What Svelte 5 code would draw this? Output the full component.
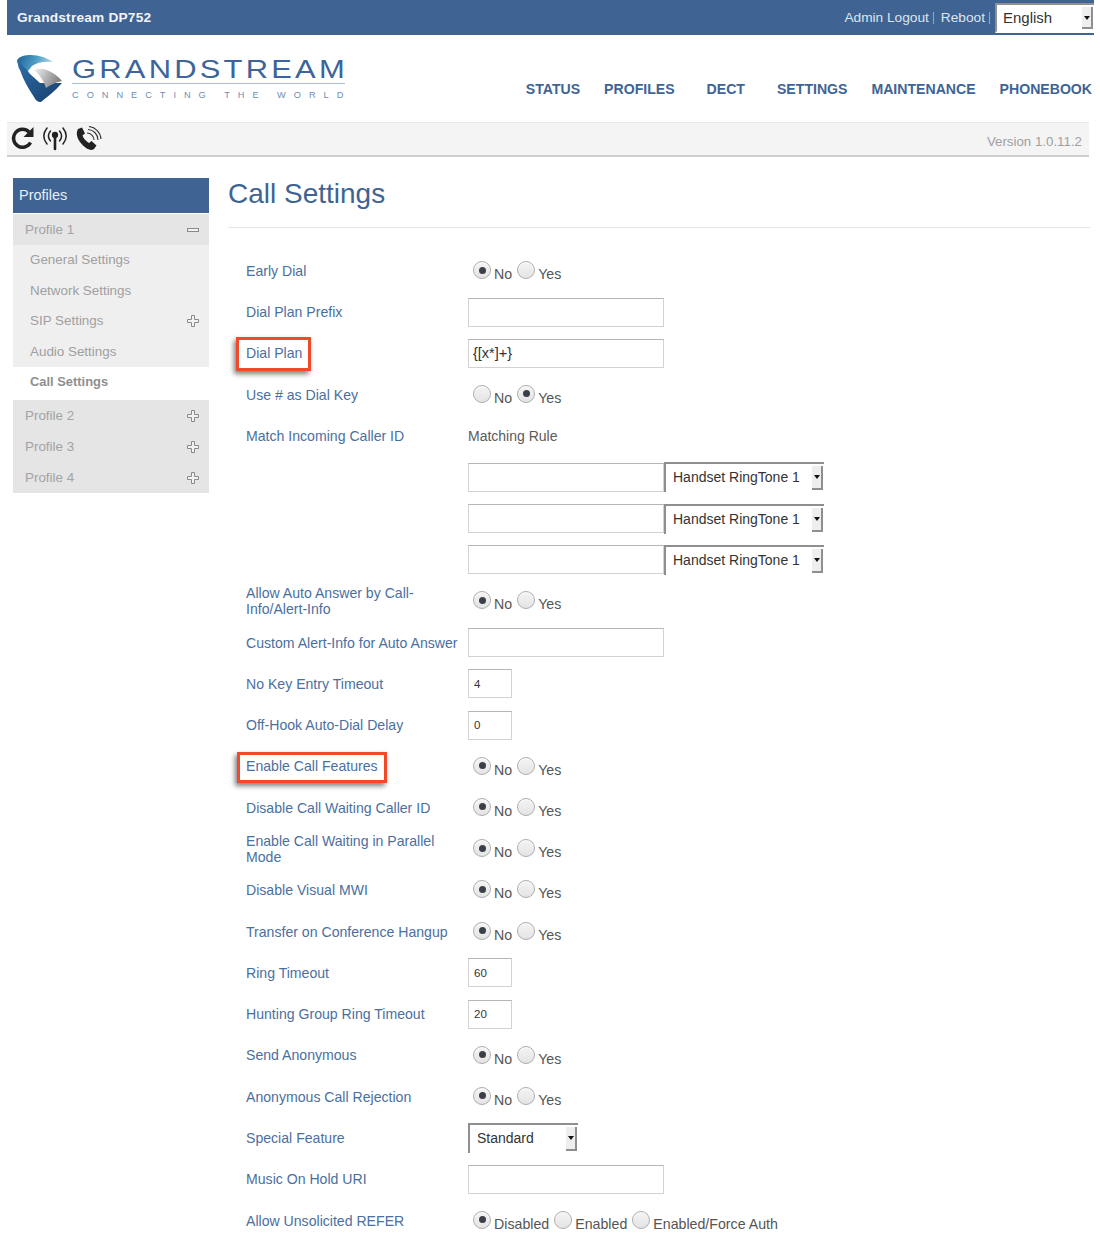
<script>
  const nav = [
    { t: 'STATUS', c: '' }, { t: 'PROFILES', c: 'wide' }, { t: 'DECT', c: 'wide' },
    { t: 'SETTINGS', c: '' }, { t: 'MAINTENANCE', c: '' }, { t: 'PHONEBOOK', c: '' }
  ];
  const rt = 'Handset RingTone 1';
  const rows = [
    { l: 'Early Dial', k: 'radio', on: 0 },
    { l: 'Dial Plan Prefix', k: 'text' },
    { l: 'Dial Plan', k: 'text', v: '{[x*]+}', box: 'b1' },
    { l: 'Use # as Dial Key', k: 'radio', on: 1 },
    { l: 'Match Incoming Caller ID', k: 'plain', v: 'Matching Rule' },
    { l: '', k: 'match' }, { l: '', k: 'match' }, { l: '', k: 'match' },
    { l: 'Allow Auto Answer by Call-Info/Alert-Info', k: 'radio', on: 0 },
    { l: 'Custom Alert-Info for Auto Answer', k: 'text' },
    { l: 'No Key Entry Timeout', k: 'small', v: '4' },
    { l: 'Off-Hook Auto-Dial Delay', k: 'small', v: '0' },
    { l: 'Enable Call Features', k: 'radio', on: 0, box: 'b2' },
    { l: 'Disable Call Waiting Caller ID', k: 'radio', on: 0 },
    { l: 'Enable Call Waiting in Parallel Mode', k: 'radio', on: 0 },
    { l: 'Disable Visual MWI', k: 'radio', on: 0 },
    { l: 'Transfer on Conference Hangup', k: 'radio', on: 0 },
    { l: 'Ring Timeout', k: 'small', v: '60' },
    { l: 'Hunting Group Ring Timeout', k: 'small', v: '20' },
    { l: 'Send Anonymous', k: 'radio', on: 0 },
    { l: 'Anonymous Call Rejection', k: 'radio', on: 0 },
    { l: 'Special Feature', k: 'special' },
    { l: 'Music On Hold URI', k: 'text' },
    { l: 'Allow Unsolicited REFER', k: 'radio', on: 0, opts: ['Disabled', 'Enabled', 'Enabled/Force Auth'] }
  ];
</script>

{#snippet plus()}
  <svg class="pm" width="12" height="12" viewBox="0 0 12 12"><path d="M4.5 .5h3v4h4v3h-4v4h-3v-4h-4v-3h4z" fill="#f2f2f2" stroke="#8a8a8a"/></svg>
{/snippet}

{#snippet selectBox(text, cls)}
  <div class="sel {cls}">
    <span>{text}</span>
    <i class="arrow"></i>
  </div>
{/snippet}

<div class="page">
  <header class="top">
    <strong>Grandstream DP752</strong>
    <div class="top-r">
      <a href="#a">Admin Logout</a><b></b><a href="#a">Reboot</a><b></b>
      <div class="lang"><span>English</span><i class="arrow"></i></div>
    </div>
  </header>

  <div class="brand">
    <div class="logo">
      <svg width="46" height="48" viewBox="0 0 46 48">
        <defs>
          <linearGradient id="lg1" x1="0" y1="0" x2="1" y2="0.2"><stop offset="0" stop-color="#1d5f96"/><stop offset=".55" stop-color="#4b9cc4"/><stop offset="1" stop-color="#a9d3e2"/></linearGradient>
          <linearGradient id="lg2" x1="0" y1="0" x2="1" y2="1"><stop offset="0" stop-color="#2f6ea6"/><stop offset="1" stop-color="#173f6e"/></linearGradient>
          <linearGradient id="lg3" x1="0" y1="0" x2="1" y2="0.4"><stop offset="0" stop-color="#f2f2f2"/><stop offset="1" stop-color="#7f7f7f"/></linearGradient>
        </defs>
        <path d="M0 5C3 1 8 0 14 0C22 0 30 3 36 7C28 6 20 7 15 11L11 16L2 14Z" fill="url(#lg1)"/>
        <path d="M0 5L11 16C12 19 18 23 23 28L45 28C38 36 30 42 24 47C21 47 19 46 17 42C9 30 3 18 0 5Z" fill="url(#lg2)"/>
        <path d="M17 15C27 11 38 18 45 26C40 27 33 30 29 33C27 26 22 19 17 15Z" fill="url(#lg3)"/>
      </svg>
      <div class="wordmark">
        <div class="w1"><span>GRANDSTREAM</span></div>
        <div class="w2"><span>CONNECTING THE WORLD</span></div>
      </div>
    </div>
    <nav>
      {#each nav as n}<a href="#n" class={n.c}>{n.t}</a>{/each}
    </nav>
  </div>

  <div class="tools">
    <div class="icons">
      <svg width="26" height="26" viewBox="0 0 26 26"><path d="M20.5 17.5A9 9 0 1 1 19 7" fill="none" stroke="#222" stroke-width="3.4"/><path d="M23.5 2v10h-10z" fill="#222"/></svg>
      <svg width="28" height="26" viewBox="0 0 28 26" fill="none" stroke="#222" stroke-width="1.5" stroke-linecap="round"><path d="M6 3C2 8 2 14 6 19"/><path d="M9.500 6C7 9 7 13 9.500 16"/><path d="M22 3C26 8 26 14 22 19"/><path d="M18.500 6C21 9 21 13 18.500 16"/><circle cx="14" cy="10" r="2.400" fill="#222"/><path d="M14 11V24" stroke-width="2.600"/></svg>
      <svg class="phone" width="28" height="26" viewBox="0 0 28 26"><path d="M4 3L8 1.500L11 7.500L8.500 9.500C9.500 12.500 12 15.500 15 17L17.500 15L22.500 19.500L20 23C17 25 13 23.500 9 19.500C4 14.500 1 8 4 3Z" fill="#222"/><path d="M13 6A7 7 0 0 1 20 13M14 2.500A10.500 10.500 0 0 1 24 13M15 -.5A13.500 13.500 0 0 1 27 12" transform="translate(0 1)" fill="none" stroke="#333" stroke-width="1.100"/></svg>
    </div>
    <span class="ver">Version 1.0.11.2</span>
  </div>

  <div class="main">
    <aside>
      <div class="side-h">Profiles</div>
      <div class="prof">Profile 1<svg class="pm" width="12" height="12" viewBox="0 0 12 12"><rect x=".5" y="4.500" width="11" height="3" fill="#f2f2f2" stroke="#8a8a8a"/></svg></div>
      <ul>
        <li>General Settings</li>
        <li>Network Settings</li>
        <li>SIP Settings{@render plus()}</li>
        <li>Audio Settings</li>
      </ul>
      <div class="cur">Call Settings</div>
      <div class="prof">Profile 2{@render plus()}</div>
      <div class="prof">Profile 3{@render plus()}</div>
      <div class="prof">Profile 4{@render plus()}</div>
    </aside>

    <section>
      <h1>Call Settings</h1>
      <div class="rows">
        {#each rows as r, i}
          <div class="row">
            <div class="lab">
              <span>{r.l}</span>
              {#if r.box}<i class="mark {r.box}"></i>{/if}
            </div>
            <div class="ctl">
              {#if r.k === 'radio'}
                <div class="radios">
                  {#each r.opts ?? ['No', 'Yes'] as o, j}
                    <label><input type="radio" name={'r' + i} checked={j === r.on} /><span>{o}</span></label>
                  {/each}
                </div>
              {:else if r.k === 'text'}
                <input class="tx" type="text" value={r.v ?? ''} />
              {:else if r.k === 'small'}
                <input class="tx sm" type="text" value={r.v} />
              {:else if r.k === 'plain'}
                <span class="plain">{r.v}</span>
              {:else if r.k === 'match'}
                <div class="pair"><input class="tx" type="text" />{@render selectBox(rt, 'ring')}</div>
              {:else if r.k === 'special'}
                {@render selectBox('Standard', 'std')}
              {/if}
            </div>
          </div>
        {/each}
      </div>
    </section>
  </div>
</div>

<style>
  :global(body) { margin: 0; background: #fff; font-family: "Liberation Sans", Arial, sans-serif; }
  .page { width: 1100px; height: 1242px; overflow: hidden; font-size: 14px; }
  a { color: inherit; text-decoration: none; }

  .top { margin-left: 7px; width: 1087px; height: 35px; box-sizing: border-box; background: #3f6494; color: #f1f4f8; display: flex; align-items: center; justify-content: space-between; padding-left: 10px; }
  .top strong { font-size: 13.7px; letter-spacing: .2px; }
  .top-r { display: flex; align-items: center; color: #dde4ee; font-size: 13.7px; }
  .top-r b { width: 1px; height: 12px; background: #8fa6c4; margin: 0 5px 0 4px; }
  .top-r a:nth-of-type(2) { margin-left: 2px; }
  .lang { position: relative; width: 99px; height: 30px; box-sizing: border-box; background: #fff; color: #333; border: 2px solid #8f8f8f; border-right: 0; border-bottom-color: #fff; padding: 4px 6px; font-size: 15px; line-height: 18px; }

  .arrow { position: absolute; right: 1px; top: 2px; bottom: 2px; width: 11px; background: #eeeeee; border-right: 2px solid #8f8f8f; border-bottom: 2px solid #8f8f8f; box-sizing: border-box; }
  .arrow::after { content: ""; position: absolute; left: 2px; top: 9px; border: 3.5px solid transparent; border-top: 4px solid #111; border-bottom: 0; }

  .brand { margin-left: 7px; width: 1087px; height: 87px; position: relative; display: flex; justify-content: space-between; }
  .logo { display: flex; margin: 20px 0 0 10px; gap: 9px; align-items: flex-start; height: 48px; }
  .wordmark { color: #3c659b; width: 273px; }
  .w1 { height: 29px; box-sizing: border-box; border-bottom: 1px solid #a9bfda; line-height: 28px; font-size: 25px; white-space: nowrap; }
  .w1 span { display: inline-block; transform: scaleX(1.237); transform-origin: left; letter-spacing: 2.6px; }
  .w2 { font-size: 9.2px; letter-spacing: 8px; line-height: 12px; margin-top: 5px; color: #6e8cb3; white-space: nowrap; }
  nav { display: flex; gap: 24px; margin-top: 46px; color: #3f6494; font-weight: bold; font-size: 14.1px; height: 17px; line-height: 17px; position: absolute; right: 2px; }
  nav a.wide { margin-right: 8px; }

  .tools { margin-left: 7px; width: 1082px; height: 35px; box-sizing: border-box; background: #f4f4f4; border-top: 1px solid #e8e8e8; border-bottom: 2px solid #cfcfcf; display: flex; justify-content: space-between; align-items: center; padding: 0 7px 0 3px; }
  .icons { display: flex; gap: 5px; align-items: center; height: 26px; margin-top: -2px; }
  .phone { margin-top: 2px; }
  .ver { color: #a0a0a0; font-size: 13.3px; margin-top: 4px; }

  .main { display: flex; margin: 21px 0 0 13px; }
  aside { width: 196px; color: #9f9f9f; flex: none; font-size: 13.4px; }
  .side-h { height: 35px; background: #3f6494; color: #e9eef5; line-height: 35px; padding-left: 6px; font-size: 14.5px; margin-bottom: 1px; }
  .prof { height: 31px; background: #e5e5e5; display: flex; align-items: center; justify-content: space-between; padding: 0 10px 0 12px; color: #a3a3a3; }
  ul { list-style: none; margin: 0; padding: 0; background: #efefef; }
  li { height: 30.5px; box-sizing: border-box; display: flex; align-items: center; justify-content: space-between; padding: 0 10px 1px 17px; color: #a0a0a0; }
  .cur { height: 33px; box-sizing: border-box; display: flex; align-items: center; padding: 0 0 5px 17px; font-weight: bold; color: #8f8f8f; font-size: 12.9px; }
  .pm { flex: none; }

  section { margin-left: 19px; width: 862px; flex: none; }
  h1 { margin: 0; height: 48px; padding-top: 1px; font-size: 28px; font-weight: normal; line-height: 30px; color: #3f6494; border-bottom: 1px solid #e6e6e6; }
  .rows { padding: 22.2px 0 0 18px; }
  .row { height: 41.3px; display: grid; grid-template-columns: 222px 1fr; align-items: center; }
  .lab { position: relative; color: #4b6f9f; line-height: 16px; font-size: 14.1px; }
  .lab span { display: block; width: 218px; }
  .ctl { display: flex; align-items: center; color: #555; }

  .mark { position: absolute; border: 3px solid #f1492a; box-shadow: -2px 3px 5px rgba(0,0,0,.5); box-sizing: border-box; pointer-events: none; }
  .mark.b1 { left: -10px; top: -8px; width: 75px; height: 34px; }
  .mark.b2 { left: -9px; top: -6px; width: 150px; height: 31px; }

  .radios { display: flex; gap: 5px; padding: 1.4px 0 0 5px; }
  label { display: flex; align-items: flex-start; gap: 3px; }
  label span { margin-top: 5px; line-height: 16px; font-size: 14.2px; }
  input[type="radio"] { appearance: none; -webkit-appearance: none; width: 18px; height: 18px; margin: 0; border-radius: 50%; background: linear-gradient(#f4f4f4, #e4e4e4); border: 1px solid #adadad; box-shadow: inset 0 1px 1px #fff; box-sizing: border-box; position: relative; }
  input[type="radio"]:checked::after { content: ""; position: absolute; left: 4.5px; top: 4.5px; width: 7px; height: 7px; border-radius: 50%; background: #3a3f48; }

  .tx { width: 196px; height: 29px; box-sizing: border-box; border: 1px solid #d2d2d2; border-top-color: #b5b5b5; background: #fff; padding: 0 4px; font: 14.5px "Liberation Sans", Arial, sans-serif; color: #333; margin: 0; outline: none; }
  .tx.sm { width: 44px; font-size: 11.5px; padding: 0 5px; }
  .plain { color: #5a5a5a; }
  .pair { display: flex; align-items: center; }

  .sel { position: relative; height: 30px; box-sizing: border-box; background: #fff; border-top: 2px solid #8f8f8f; border-left: 2px solid #8f8f8f; color: #333; line-height: 26px; }
  .sel.ring { width: 160px; padding-left: 7px; }
  .sel.std { width: 110px; padding-left: 7px; }
</style>
